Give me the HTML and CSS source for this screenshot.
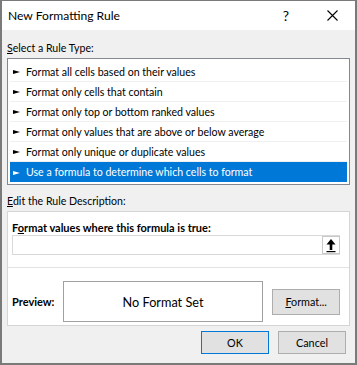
FILE: index.html
```html
<!DOCTYPE html>
<html lang="en">
<head>
    <meta charset="UTF-8">
    <title>New Formatting Rule</title>
    <link rel="stylesheet" href="styles.css">
</head>
<body>
    <div class="dialog">
        <!-- Title bar -->
        <div class="titlebar">
            <span class="title">New Formatting Rule</span>
            <div class="caption-buttons">
                <span class="caption-btn help">?</span>
                <span class="caption-btn close">
                    <svg width="11" height="11" viewBox="0 0 11 11">
                        <path d="M0.5 0.5 L10.5 10.5 M10.5 0.5 L0.5 10.5" stroke="#000" stroke-width="1.1" fill="none"/>
                    </svg>
                </span>
            </div>
        </div>

        <div class="content">
            <div class="section-label"><u>S</u>elect a Rule Type:</div>
            <ul class="rule-list">
                <li><span class="pointer"></span>Format all cells based on their values</li>
                <li><span class="pointer"></span>Format only cells that contain</li>
                <li><span class="pointer"></span>Format only top or bottom ranked values</li>
                <li><span class="pointer"></span>Format only values that are above or below average</li>
                <li><span class="pointer"></span>Format only unique or duplicate values</li>
                <li class="selected"><span class="pointer"></span>Use a formula to determine which cells to format</li>
            </ul>

            <div class="section-label edit-label"><u>E</u>dit the Rule Description:</div>
            <div class="desc-panel">
                <div class="formula-block">
                    <div class="formula-label">F<u>o</u>rmat values where this formula is true:</div>
                    <div class="formula-input">
                        <span class="ref-btn">
                            <svg width="10" height="15" viewBox="0 0 10 15">
                                <path d="M5 1 L9.5 6.5 L6.3 6.5 L6.3 12 L3.7 12 L3.7 6.5 L0.5 6.5 Z" fill="#000"/>
                                <rect x="0.5" y="13" width="9" height="1.2" fill="#000"/>
                            </svg>
                        </span>
                    </div>
                </div>
                <div class="panel-sep"></div>
                <div class="preview-row">
                    <span class="preview-label">Preview:</span>
                    <div class="preview-box">No Format Set</div>
                    <button class="btn format-btn"><u>F</u>ormat...</button>
                </div>
            </div>

            <div class="dialog-buttons">
                <button class="btn default">OK</button>
                <button class="btn">Cancel</button>
            </div>
        </div>
    </div>
</body>
</html>
```

FILE: styles.css
```css
/* Reset */
* {
    box-sizing: border-box;
    margin: 0;
    padding: 0;
}

body {
    font-family: Lato, 'Noto Sans', sans-serif;
    font-size: 10.6px;
    color: #000;
    background-color: #fff;
}

/* Window frame */
.dialog {
    width: 357px;
    height: 365px;
    border: 1px solid #7a7a7a;
    border-width: 1px 2px 2px 2px;
    background-color: #f0f0f0;
    display: flex;
    flex-direction: column;
}

.titlebar {
    height: 29px;
    background-color: #fff;
    display: flex;
    justify-content: space-between;
    align-items: center;
    padding-left: 6px;
}

.title {
    font-size: 12.1px;
    color: #000;
}

.caption-buttons {
    display: flex;
    height: 100%;
}

.caption-btn {
    width: 46px;
    height: 100%;
    display: flex;
    align-items: center;
    justify-content: center;
}

.caption-btn.help {
    font-size: 14px;
}

/* Body */
.content {
    flex: 1;
    padding: 10px 5px 0 5px;
}

.section-label {
    line-height: 16px;
    height: 16px;
    margin-bottom: 2px;
}

.edit-label {
    margin-top: 8px;
}

/* Rule type list */
.rule-list {
    list-style: none;
    background-color: #fff;
    border: 1px solid #828790;
    padding: 3px 2px 2px 2px;
}

.rule-list li {
    height: 20px;
    line-height: 19px;
    padding-top: 1px;
    border-bottom: 1px solid #f0f0f0;
    display: flex;
    align-items: center;
    white-space: nowrap;
}

.rule-list li:last-child {
    border-bottom: none;
}

.rule-list li.selected {
    background-color: #0078d7;
    color: #fff;
}

.pointer {
    width: 0;
    height: 0;
    margin: 0 6px 0 3px;
    border-top: 2px solid transparent;
    border-bottom: 2px solid transparent;
    border-left: 7px solid currentColor;
}

/* Description panel */
.desc-panel {
    background-color: #fff;
    border: 1px solid #d5d5d5;
}

.formula-block {
    padding: 9px 9px 0 4px;
}

.formula-label {
    font-size: 11px;
    font-weight: bold;
    line-height: 14px;
    height: 14px;
}

.formula-input {
    height: 20px;
    border: 1px solid #d9d9d9;
    border-right: none;
    display: flex;
    justify-content: flex-end;
}

.ref-btn {
    width: 18px;
    height: 100%;
    background-color: #fff;
    border: 1px solid #c8c8c8;
    display: flex;
    align-items: center;
    justify-content: center;
}

.panel-sep {
    height: 1px;
    background-color: #e3e3e3;
    margin-top: 12px;
}

.preview-row {
    display: flex;
    align-items: center;
    padding: 13px 9px 3px 4px;
}

.preview-label {
    font-size: 11px;
    font-weight: bold;
    width: 51px;
}

.preview-box {
    width: 201px;
    height: 41px;
    border: 1px solid #a0a0a0;
    display: flex;
    align-items: center;
    justify-content: center;
    font-size: 12.7px;
}

.btn {
    font-family: inherit;
    font-size: 10.8px;
    color: #000;
    background-color: #e1e1e1;
    border: 1px solid #adadad;
    height: 23px;
    width: 68px;
}

.format-btn {
    height: 26px;
    margin-left: 9px;
}

.btn.default {
    border-color: #0078d7;
}

.dialog-buttons {
    display: flex;
    justify-content: flex-end;
    gap: 9px;
    margin-top: 5px;
    padding-right: 4px;
}
```
